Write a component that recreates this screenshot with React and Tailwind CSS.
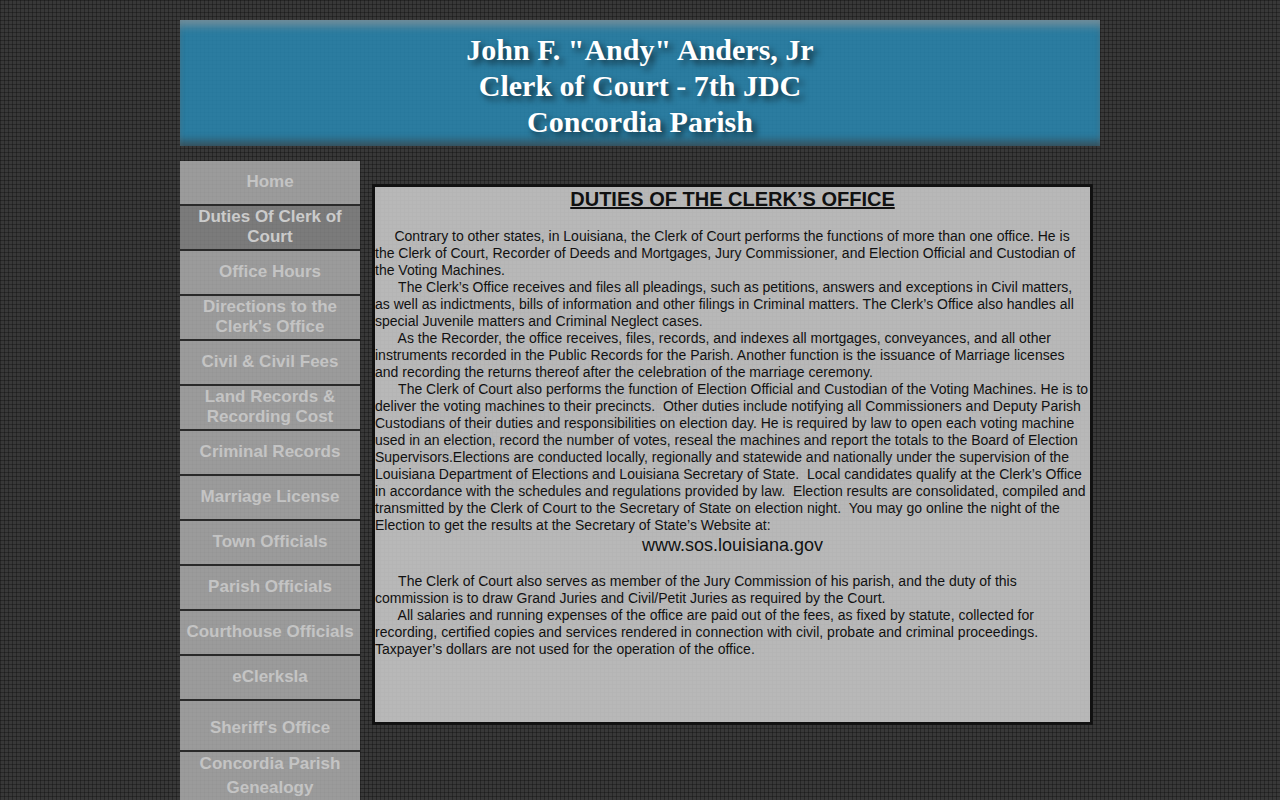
const navItems = [
  { label: "Home" },
  { label: "Duties Of Clerk of Court", active: true },
  { label: "Office Hours" },
  { label: "Directions to the Clerk's Office" },
  { label: "Civil & Civil Fees" },
  { label: "Land Records & Recording Cost" },
  { label: "Criminal Records" },
  { label: "Marriage License" },
  { label: "Town Officials" },
  { label: "Parish Officials" },
  { label: "Courthouse Officials" },
  { label: "eClerksla" },
  { label: "Sheriff's Office", size: "tall" },
  { label: "Concordia Parish Genealogy", size: "double" },
];

// Paragraphs are indented with leading non-breaking spaces
const duties = [
  "\u00a0\u00a0\u00a0\u00a0 Contrary to other states, in Louisiana, the Clerk of Court performs the functions of more than one office. He is the Clerk of Court, Recorder of Deeds and Mortgages, Jury Commissioner, and Election Official and Custodian of the Voting Machines.",
  "\u00a0\u00a0\u00a0\u00a0\u00a0 The Clerk’s Office receives and files all pleadings, such as petitions, answers and exceptions in Civil matters, as well as indictments, bills of information and other filings in Criminal matters. The Clerk’s Office also handles all special Juvenile matters and Criminal Neglect cases.",
  "\u00a0\u00a0\u00a0\u00a0\u00a0 As the Recorder, the office receives, files, records, and indexes all mortgages, conveyances, and all other instruments recorded in the Public Records for the Parish. Another function is the issuance of Marriage licenses and recording the returns thereof after the celebration of the marriage ceremony.",
  "\u00a0\u00a0\u00a0\u00a0\u00a0 The Clerk of Court also performs the function of Election Official and Custodian of the Voting Machines. He is to deliver the voting machines to their precincts.\u00a0 Other duties include notifying all Commissioners and Deputy Parish Custodians of their duties and responsibilities on election day. He is required by law to open each voting machine used in an election, record the number of votes, reseal the machines and report the totals to the Board of Election Supervisors.Elections are conducted locally, regionally and statewide and nationally under the supervision of the Louisiana Department of Elections and Louisiana Secretary of State.\u00a0 Local candidates qualify at the Clerk’s Office in accordance with the schedules and regulations provided by law.\u00a0 Election results are consolidated, compiled and transmitted by the Clerk of Court to the Secretary of State on election night.\u00a0 You may go online the night of the Election to get the results at the Secretary of State’s Website at:",
];

const closing = [
  "\u00a0\u00a0\u00a0\u00a0\u00a0 The Clerk of Court also serves as member of the Jury Commission of his parish, and the duty of this commission is to draw Grand Juries and Civil/Petit Juries as required by the Court.",
  "\u00a0\u00a0\u00a0\u00a0\u00a0 All salaries and running expenses of the office are paid out of the fees, as fixed by statute, collected for recording, certified copies and services rendered in connection with civil, probate and criminal proceedings. Taxpayer’s dollars are not used for the operation of the office.",
];

function sizeClass(size) {
  switch (size) {
    case "tall":   return "min-h-[49px] pt-1 leading-6";
    case "double": return "leading-6";
    default:       return "min-h-[43px] pb-0.5 leading-5";
  }
}

function Header() {
  return (
    <header className="bg-[rgba(41,136,179,0.85)] pt-3 pb-1.5 text-center shadow-[inset_0_10px_8px_-4px_rgba(150,150,150,0.65),inset_0_-9px_8px_-4px_rgba(60,60,60,0.7)]">
      <h1 className="font-['Liberation_Serif',serif] text-[30px] leading-9 font-bold text-white [text-shadow:4px_4px_6px_rgba(0,0,0,0.6)]">
        John F. "Andy" Anders, Jr
        <br />
        Clerk of Court - 7th JDC
        <br />
        Concordia Parish
      </h1>
    </header>
  );
}

function NavItem({ item }) {
  return (
    <li className="border-b-2 border-[#2a2a2a] last:border-b-0">
      <a
        href="#"
        aria-current={item.active ? "page" : undefined}
        className={`flex items-center justify-center px-1 text-center text-[17px] font-bold ${
          item.active ? "bg-[rgba(140,140,140,0.8)] text-[#cbcbcb]" : "bg-[rgba(180,180,180,0.8)] text-[#c4c4c4]"
        } ${sizeClass(item.size)}`}
      >
        {item.label}
      </a>
    </li>
  );
}

export default function App() {
  return (
    <div className="min-h-screen bg-[#383838] bg-[linear-gradient(to_right,rgba(0,0,0,0.28)_1px,transparent_1px),linear-gradient(to_bottom,rgba(0,0,0,0.28)_1px,transparent_1px)] bg-[size:4px_4px] pt-5 font-['Liberation_Sans',Arial,sans-serif]">
      <div className="mx-auto max-w-[920px]">
        <Header />

        <div className="flex items-start gap-3 pt-[15px]">
          <nav className="w-[180px] shrink-0">
            <ul className="flex flex-col">
              {navItems.map((item) => (
                <NavItem key={item.label} item={item} />
              ))}
            </ul>
          </nav>

          <main className="mt-[23px] mr-[7px] min-w-0 flex-1 border-[3px] border-[#111] bg-[rgba(205,205,205,0.86)] bg-clip-padding pb-16 text-sm leading-[17px] text-[#111]">
            <h2 className="mb-4 text-center text-xl leading-[25px] font-bold underline">
              DUTIES OF THE CLERK’S OFFICE
            </h2>
            {duties.map((text, i) => (
              <p key={i}>{text}</p>
            ))}
            <p className="mb-4 text-center text-lg leading-[23px]">www.sos.louisiana.gov</p>
            {closing.map((text, i) => (
              <p key={i}>{text}</p>
            ))}
          </main>
        </div>
      </div>
    </div>
  );
}
